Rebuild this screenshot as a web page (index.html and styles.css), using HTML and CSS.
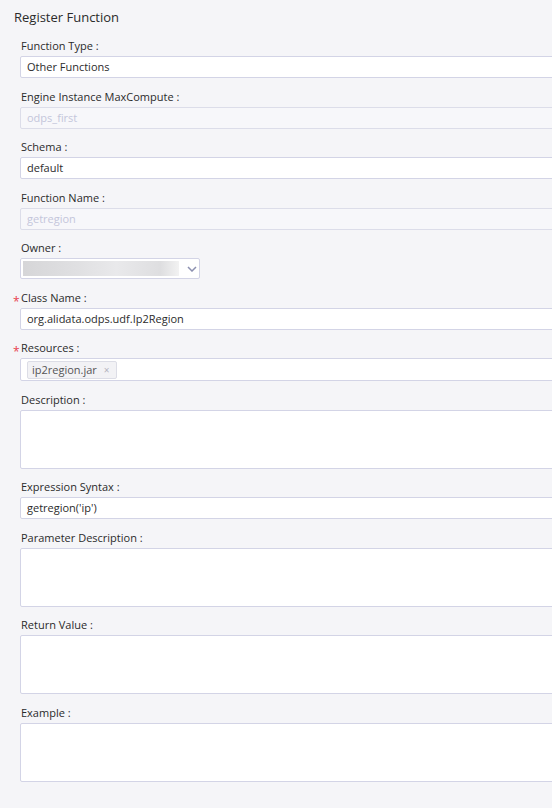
FILE: index.html
```html
<!DOCTYPE html>
<html lang="en">
<head>
<meta charset="utf-8">
<title>Register Function</title>
<link rel="stylesheet" href="styles.css">
</head>
<body>
<div class="page">
  <h1 class="title">Register Function</h1>
  <div class="form">
    <div class="field">
      <div class="label">Function Type :</div>
      <div class="control">Other Functions</div>
    </div>
    <div class="field">
      <div class="label">Engine Instance MaxCompute :</div>
      <div class="control is-disabled">odps_first</div>
    </div>
    <div class="field">
      <div class="label">Schema :</div>
      <div class="control">default</div>
    </div>
    <div class="field">
      <div class="label">Function Name :</div>
      <div class="control is-disabled">getregion</div>
    </div>
    <div class="field">
      <div class="label">Owner :</div>
      <div class="select">
        <span class="select-value"></span>
        <svg class="chevron" width="10" height="6" viewBox="0 0 10 6"><polyline points="1,1 5,5 9,1" fill="none" stroke="#8c90b0" stroke-width="1.5"/></svg>
      </div>
    </div>
    <div class="field">
      <div class="label required">Class Name :</div>
      <div class="control">org.alidata.odps.udf.Ip2Region</div>
    </div>
    <div class="field">
      <div class="label required">Resources :</div>
      <div class="control tags"><span class="tag">ip2region.jar<span class="tag-close">×</span></span></div>
    </div>
    <div class="field">
      <div class="label">Description :</div>
      <div class="control textarea"></div>
    </div>
    <div class="field">
      <div class="label">Expression Syntax :</div>
      <div class="control">getregion('ip')</div>
    </div>
    <div class="field">
      <div class="label">Parameter Description :</div>
      <div class="control textarea"></div>
    </div>
    <div class="field">
      <div class="label">Return Value :</div>
      <div class="control textarea"></div>
    </div>
    <div class="field">
      <div class="label">Example :</div>
      <div class="control textarea"></div>
    </div>
  </div>
</div>
</body>
</html>
```
FILE: styles.css
```css
html, body {
  margin: 0;
  padding: 0;
  background: #f5f5f8;
  overflow: hidden;
}
body {
  font-family: "Open Sans", "Noto Sans", sans-serif;
  font-size: 11px;
  color: #2b2b2b;
}
.page {
  padding: 7px 0 0 14px;
  height: 808px;
  box-sizing: border-box;
  overflow: hidden;
}
.title {
  margin: 0;
  font-size: 13px;
  font-weight: 400;
  line-height: 20px;
  color: #2b2b2b;
}
.form {
  margin-top: 9px;
  padding-left: 6px;
  display: flex;
  flex-direction: column;
  gap: 8.5px;
}
.field {
  display: flex;
  flex-direction: column;
}
.label {
  line-height: 20px;
  height: 20px;
  padding-left: 1px;
  color: #2b2b2b;
  white-space: nowrap;
}
.label.required::before {
  content: "*";
  display: inline-block;
  width: 8px;
  margin-left: -8px;
  color: #e8434f;
  font-size: 12px;
  line-height: 10px;
  vertical-align: -4px;
}
.control {
  width: 545px;
  height: 22px;
  box-sizing: border-box;
  border: 1px solid #d3d4e6;
  border-radius: 2px;
  background: #fff;
  padding: 0 6px;
  line-height: 20px;
  color: #2b2b2b;
  white-space: nowrap;
}
.control.is-disabled {
  background: #f7f7fa;
  border-color: #dcdde9;
  color: #c4c6da;
}
.control.textarea {
  height: 59px;
}
.control.tags {
  height: 23px;
  display: flex;
  align-items: center;
  padding: 0 6px;
}
.tag {
  display: inline-flex;
  align-items: center;
  height: 18px;
  box-sizing: border-box;
  padding: 0 6px 0 4px;
  background: #f2f2f5;
  border: 1px solid #dcdde6;
  border-radius: 2px;
  color: #555;
  line-height: 16px;
}
.tag-close {
  margin-left: 7px;
  color: #b2b3bf;
  font-size: 10px;
}
.select {
  width: 180px;
  height: 21px;
  box-sizing: border-box;
  border: 1px solid #d3d4e6;
  border-radius: 2px;
  background: #fff;
  display: flex;
  align-items: center;
  padding: 2px 0 2px 2px;
}
.select-value {
  width: 156px;
  height: 15px;
  background: linear-gradient(90deg, #d6d6d8 0%, #e0e0e2 35%, #e9e9eb 60%, #dedee0 88%, #f2f2f2 100%);
  filter: blur(0.6px);
}
.chevron {
  margin-left: 8px;
}
```
